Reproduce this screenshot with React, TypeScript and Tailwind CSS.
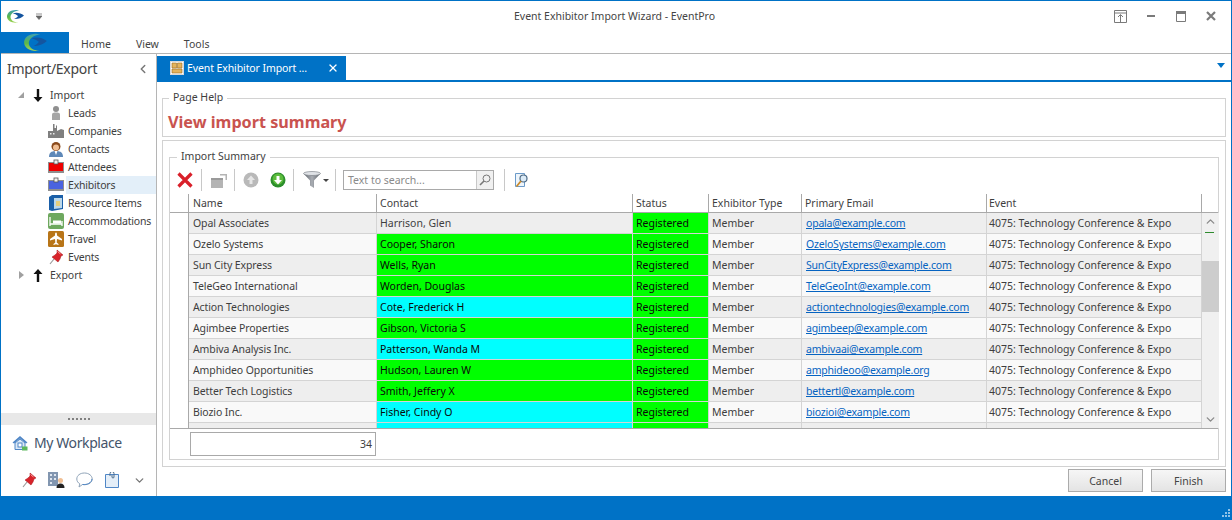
import { ReactNode } from "react";
import { ChevronDown, ChevronLeft, ChevronUp, X } from "lucide-react";

interface Row {
  name: string;
  contact: string;
  tint: "" | "bg-[#00ff00] text-[#0a0a0a]" | "bg-[#00ffff] text-[#0a0a0a]";
  email: string;
}

const GREEN = "bg-[#00ff00] text-[#0a0a0a]" as const;
const CYAN = "bg-[#00ffff] text-[#0a0a0a]" as const;

const rows: Row[] = [
  { name: "Opal Associates", contact: "Harrison, Glen", tint: "", email: "opala@example.com" },
  { name: "Ozelo Systems", contact: "Cooper, Sharon", tint: GREEN, email: "OzeloSystems@example.com" },
  { name: "Sun City Express", contact: "Wells, Ryan", tint: GREEN, email: "SunCityExpress@example.com" },
  { name: "TeleGeo International", contact: "Worden, Douglas", tint: GREEN, email: "TeleGeoInt@example.com" },
  { name: "Action Technologies", contact: "Cote, Frederick H", tint: CYAN, email: "actiontechnologies@example.com" },
  { name: "Agimbee Properties", contact: "Gibson, Victoria S", tint: GREEN, email: "agimbeep@example.com" },
  { name: "Ambiva Analysis Inc.", contact: "Patterson, Wanda M", tint: CYAN, email: "ambivaai@example.com" },
  { name: "Amphideo Opportunities", contact: "Hudson, Lauren W", tint: GREEN, email: "amphideoo@example.org" },
  { name: "Better Tech Logistics", contact: "Smith, Jeffery X", tint: GREEN, email: "bettertl@example.com" },
  { name: "Biozio Inc.", contact: "Fisher, Cindy O", tint: CYAN, email: "biozioi@example.com" },
];

function Logo({ w, h }: { w: number; h: number }) {
  return (
    <svg width={w} height={h} viewBox="0 0 24 20">
      <defs>
        <linearGradient id="crescent" x1="0" y1="0" x2="0" y2="1">
          <stop offset="0" stopColor="#3f9fb0" />
          <stop offset="0.55" stopColor="#5cb848" />
          <stop offset="1" stopColor="#a4d65a" />
        </linearGradient>
      </defs>
      <path d="M17 1.500C8 -1 0 3.500 0 10c0 6 7 10 16 8.500C9 18.500 4.500 14.500 5 10c.4-4 5-8 12-8.500z" fill="url(#crescent)" />
      <path d="M8 5.500c5-1.500 11-1 16 3-3.500 3.500-9 5.500-14 5 3-1.200 5-3 5.500-4.300C13.500 7.500 11 6.300 8 5.500z" fill="#14559f" />
    </svg>
  );
}

function Pin() {
  return (
    <svg width="16" height="16" viewBox="0 0 16 16">
      <path d="M2 15l4-5" stroke="#9a9a9a" strokeWidth="1.200" />
      <path d="M9 1l6 5-2 1-1 3-2 3-6-5 3-2 2-2z" fill="#d8232a" stroke="#a31218" strokeWidth=".5" />
      <path d="M9.500 2.500l3 2.500" stroke="#f7a0a0" />
    </svg>
  );
}

function Badge({ fill }: { fill: string }) {
  return (
    <svg width="16" height="16" viewBox="0 0 16 16">
      <rect x="0" y="3" width="16" height="11" fill="#8f8f8f" />
      <rect x="1" y="4" width="14" height="8" fill={fill} />
      <rect x="6" y="1" width="4" height="4" fill="#f2f2f2" stroke="#555" strokeWidth=".8" />
    </svg>
  );
}

const treeIcons: Record<string, ReactNode> = {
  Leads: (
    <svg width="16" height="16" viewBox="0 0 16 16">
      <circle cx="8" cy="4" r="3" fill="#8f8f8f" />
      <path d="M4 15V9.500C4 8 5.500 7.500 8 7.500s4 .5 4 2V15z" fill="#a6a6a6" />
    </svg>
  ),
  Companies: (
    <svg width="16" height="16" viewBox="0 0 16 16">
      <path d="M0 15V8l5 0V1h1.500v4H8V2.500h1V8l4-2 3 1v8z" fill="#7f7f7f" />
      <path d="M2 10h1.500v1.500H2zm3 0h1.500v1.500H5z" fill="#e8e8e8" />
    </svg>
  ),
  Contacts: (
    <svg width="16" height="16" viewBox="0 0 16 16">
      <path d="M1 16c0-4 2-6 7-6s7 2 7 6z" fill="#5e88b8" />
      <path d="M6.500 10L8 14l1.500-4z" fill="#fff" />
      <circle cx="8" cy="5.500" r="4.500" fill="#8a4a1c" />
      <circle cx="8" cy="6.500" r="3" fill="#f0bf94" />
    </svg>
  ),
  Attendees: <Badge fill="#ee0000" />,
  Exhibitors: <Badge fill="#4a63e0" />,
  "Resource Items": (
    <svg width="16" height="16" viewBox="0 0 16 16">
      <path d="M1 2l3-2h11v14l-11 2-3-1z" fill="#1a5fa8" />
      <path d="M6 3h8v10l-8 1z" fill="#bcd8ea" />
      <path d="M8 6h4v5H8z" fill="#e6cf7c" />
    </svg>
  ),
  Accommodations: (
    <svg width="16" height="16" viewBox="0 0 16 16">
      <rect width="16" height="16" rx="2" fill="#6ea85f" />
      <path d="M2 4v9M14 8v5M2 11h12" stroke="#fff" strokeWidth="1.300" />
      <rect x="5" y="7.500" width="8" height="3" fill="#fff" />
    </svg>
  ),
  Travel: (
    <svg width="16" height="16" viewBox="0 0 16 16">
      <rect width="16" height="16" rx="1.500" fill="#b87518" />
      <path d="M8 1.500c.8 0 1 1 1 3l5 3.500v1.500L9 8l-.3 3.500L10.500 13v1L8 13.300 5.500 14v-1l1.800-1.500L7 8 2 9.500V8l5-3.500c0-2 .2-3 1-3z" fill="#fff" />
    </svg>
  ),
  Events: <Pin />,
};

function TreeRow({ label }: { label: string }) {
  const selected = label === "Exhibitors";
  return (
    <div className="flex h-[18px] items-center pl-[47px]">
      <span className="flex w-[16px] shrink-0">{treeIcons[label]}</span>
      <span className={`ml-[2px] flex h-full flex-1 items-center pl-[2px] tracking-[-0.2px] ${selected ? "bg-[#e3eff9]" : ""}`}>{label}</span>
    </div>
  );
}

function Sep({ ml }: { ml: string }) {
  return <div className={`h-[22px] w-px bg-[#c8c8c8] ${ml}`} />;
}

function Cell({ w, className = "", children }: { w: string; className?: string; children?: ReactNode }) {
  return (
    <div className={`flex shrink-0 items-center overflow-hidden whitespace-nowrap border-r border-[#d4d4d4] ${w} ${className}`}>
      {children}
    </div>
  );
}

function HeaderCell({ w, label, pl = "pl-[3px]" }: { w: string; label: string; pl?: string }) {
  return (
    <div className={`flex shrink-0 items-center border-r border-[#a9a9a9] ${pl} ${w}`}>{label}</div>
  );
}

function GridRow({ row, index }: { row: Row; index: number }) {
  const zebra = index % 2 === 0 ? "bg-[#eeeeee]" : "bg-[#f9f9f9]";
  return (
    <div className={`flex h-[21px] border-b border-[#d4d4d4] ${zebra}`}>
      <Cell w="w-[188px]" className="pl-[4px] tracking-[-0.1px]">{row.name}</Cell>
      <Cell w="w-[256px]" className={`pl-[3px] ${row.tint}`}>{row.contact}</Cell>
      <Cell w="w-[76px]" className={`pl-[3px] ${GREEN}`}>Registered</Cell>
      <Cell w="w-[93px]" className="pl-[3px]">Member</Cell>
      <Cell w="w-[185px]" className="pl-[4px]">
        <span className="tracking-[-0.2px] text-[#0563c1] underline">{row.email}</span>
      </Cell>
      <Cell w="w-[215px]" className="pl-[2px]">4075: Technology Conference &amp; Expo</Cell>
    </div>
  );
}

export default function App() {
  return (
    <div className="flex h-[520px] w-[1232px] flex-col overflow-hidden border-x border-t border-[#0072c6] bg-white font-['Noto_Sans',sans-serif] text-[10.500px] leading-[14px] text-[#3e3e3e]">
      {/* title bar */}
      <div className="grid h-[31px] shrink-0 grid-cols-[1fr_auto_1fr] items-center pb-[1px]">
        <div className="flex items-center pl-[6px]">
          <Logo w={17} h={15} />
          <svg className="ml-[12px]" width="6" height="7" viewBox="0 0 6 7">
            <path d="M0 1h6M0 3h6L3 6.500z" stroke="#666" fill="#666" strokeWidth=".7" />
          </svg>
        </div>
        <div className="pr-[3px] text-[#444]">Event Exhibitor Import Wizard - EventPro</div>
        <div className="flex items-center justify-end text-[#7a7a7a]">
          <svg width="13" height="13" viewBox="0 0 13 13" fill="none" stroke="#7a7a7a">
            <path d="M.5.500h12v12H.5zM.5 3h12M6.500 5v7.500M4 7l2.500-2.500L9 7" />
          </svg>
          <div className="ml-[20px] h-[2.500px] w-[8px] bg-[#7a7a7a]" />
          <svg className="ml-[21px]" width="10" height="11" viewBox="0 0 10 11" fill="none" stroke="#7a7a7a">
            <path d="M.5 1.500h9v9h-9z" />
            <path d="M0 1.500h10" strokeWidth="3" />
          </svg>
          <svg className="ml-[20px] mr-[15px]" width="10" height="10" viewBox="0 0 10 10" stroke="#7a7a7a" strokeWidth="2.200">
            <path d="M1 1l8 8M9 1l-8 8" />
          </svg>
        </div>
      </div>

      {/* ribbon tabs */}
      <div className="flex h-[22px] shrink-0 border-b border-[#b5b5b5]">
        <div className="flex h-[21px] w-[68px] items-center justify-center bg-[#0072c6]">
          <Logo w={23} h={19} />
        </div>
        <span className="ml-[12px] self-center pt-[3px] text-[#444]">Home</span>
        <span className="ml-[25px] self-center pt-[3px] text-[#444]">View</span>
        <span className="ml-[25px] self-center pt-[3px] text-[#444]">Tools</span>
      </div>

      <div className="flex min-h-0 flex-1">
        {/* navigation pane */}
        <div className="flex w-[156px] shrink-0 flex-col border-r border-[#b5b5b5]">
          <div className="flex h-[32px] shrink-0 items-center justify-between pb-[3px] pl-[6px] pr-[6px] text-[14px] tracking-[-0.3px] text-[#444]">
            Import/Export
            <ChevronLeft size={14} strokeWidth={2.500} className="text-[#777]" />
          </div>
          <div className="flex-1">
            <div className="flex h-[18px] items-center pl-[17px]">
              <svg width="6" height="6" viewBox="0 0 6 6"><path d="M6 0v6H0z" fill="#a0a0a0" /></svg>
              <svg className="ml-[9px]" width="10" height="13" viewBox="0 0 10 13"><path d="M3.800 0h2.400v8H9.500L5 13 .5 8h3.300z" fill="#111" /></svg>
              <span className="ml-[7px]">Import</span>
            </div>
            <TreeRow label="Leads" />
            <TreeRow label="Companies" />
            <TreeRow label="Contacts" />
            <TreeRow label="Attendees" />
            <TreeRow label="Exhibitors" />
            <TreeRow label="Resource Items" />
            <TreeRow label="Accommodations" />
            <TreeRow label="Travel" />
            <TreeRow label="Events" />
            <div className="flex h-[18px] items-center pl-[18px]">
              <svg width="5" height="8" viewBox="0 0 5 8"><path d="M0 0l5 4-5 4z" fill="#a0a0a0" /></svg>
              <svg className="ml-[9px]" width="10" height="13" viewBox="0 0 10 13"><path d="M3.800 13h2.400V5H9.500L5 0 .5 5h3.300z" fill="#111" /></svg>
              <span className="ml-[7px]">Export</span>
            </div>
          </div>
          <div className="flex h-[12px] shrink-0 items-center justify-center gap-[2px] bg-[#e8e8e8]">
            {[0, 1, 2, 3, 4, 5].map((i) => (
              <div key={i} className="h-[2px] w-[2px] bg-[#808080]" />
            ))}
          </div>
          <div className="flex h-[37px] shrink-0 items-center pb-[1px] pl-[11px] text-[14px] tracking-[-0.4px] text-[#44546a]">
            <svg width="16" height="16" viewBox="0 0 16 16">
              <path d="M8 1L.5 7.500 2 8.500 8 3.500l6 5 1.500-1z" fill="#4f86c6" />
              <path d="M3 8v6.500h10V8L8 4z" fill="#dbe8f6" stroke="#4f86c6" />
              <rect x="6" y="8" width="4" height="4" fill="#fff" stroke="#4f86c6" />
              <rect x="10" y="11.500" width="5.500" height="4" fill="#5cb85c" />
            </svg>
            <span className="ml-[6px]">My Workplace</span>
          </div>
          <div className="flex h-[34px] shrink-0 items-center pl-[20px] pt-[2px]">
            <Pin />
            <svg className="ml-[11px]" width="17" height="16" viewBox="0 0 17 16">
              <rect x="0" y="0" width="10" height="14" fill="#8296b0" />
              <path d="M2 2h2v2H2zm4 0h2v2H6zM2 6h2v2H2zm4 0h2v2H6zM2 10h2v2H2z" fill="#dfe6ef" />
              <circle cx="12.500" cy="8.500" r="2.500" fill="#f0bf94" />
              <path d="M8.500 16c0-3 1.500-4.500 4-4.500s4 1.500 4 4.500z" fill="#222" />
            </svg>
            <svg className="ml-[11px]" width="17" height="16" viewBox="0 0 17 16" fill="none">
              <path d="M8.500 1C4 1 .8 3.500.8 7c0 2.200 1.200 3.800 3 4.800L3 15l3.500-2.500c.7.100 1.300.2 2 .2 4.500 0 7.700-2.500 7.700-5.700S13 1 8.500 1z" fill="#fff" stroke="#8fa3b8" />
              <path d="M6.500 12.500c4.500.5 9-1.500 9.500-5.500" stroke="#4f86c6" />
            </svg>
            <svg className="ml-[12px]" width="14" height="16" viewBox="0 0 14 16">
              <path d="M.5 2.500h13v13H.5z" fill="#e4eef8" stroke="#4f86c6" />
              <path d="M5 4V1.500a2 2 0 014 0V5a1 1 0 01-2 0V3" fill="none" stroke="#4a6a8a" />
            </svg>
            <ChevronDown size={13} strokeWidth={2.500} className="ml-[14px] text-[#777]" />
          </div>
        </div>

        {/* document area */}
        <div className="flex min-w-0 flex-1 flex-col">
          <div className="flex h-[28px] shrink-0 items-end justify-between border-b-2 border-[#0072c6]">
            <div className="flex h-[24px] w-[189px] items-center bg-[#0072c6] pl-[13px] pr-[7px] text-white">
              <svg width="14" height="14" viewBox="0 0 14 14">
                <rect x=".5" y=".5" width="13" height="13" fill="#fff" stroke="#d9d9d9" />
                <path d="M2 2h4.500v5H2zM7.500 2H12v5H7.500zM2 8h10v4H2z" fill="#e3b35c" stroke="#9a6a1c" strokeWidth=".6" />
              </svg>
              <span className="ml-[3px] tracking-[-0.1px]">Event Exhibitor Import ...</span>
              <X size={12} strokeWidth={2.500} className="ml-auto" />
            </div>
            <svg className="mb-[12px] mr-[6px]" width="8" height="5" viewBox="0 0 8 5">
              <path d="M0 0h8L4 5z" fill="#0072c6" />
            </svg>
          </div>

          <div className="flex min-h-0 flex-1 flex-col px-[5px] pt-[9px]">
            <fieldset className="h-[46px] min-w-0 shrink-0 border border-[#d2d2d2]">
              <legend className="ml-[6px] -translate-y-px px-[4px]">Page Help</legend>
              <div className="mt-[7px] pl-[5px] text-[16.200px] font-bold leading-[20px] text-[#c9534f]">
                View import summary
              </div>
            </fieldset>

            <div className="mt-[3px] h-[327px] shrink-0 border border-[#d2d2d2] px-[6px] pt-[9px]">
              <fieldset className="h-[310px] min-w-0 border border-[#d2d2d2]">
                <legend className="ml-[7px] -translate-y-px px-[4px]">Import Summary</legend>

                {/* toolbar */}
                <div className="flex h-[30px] items-center pt-[2px]">
                  <svg className="ml-[7px]" width="16" height="16" viewBox="0 0 16 16" stroke="#d9202a" strokeWidth="3.200">
                    <path d="M1.500 1.500l13 13M14.500 1.500l-13 13" />
                  </svg>
                  <Sep ml="ml-[8px]" />
                  <svg className="ml-[9px]" width="16" height="15" viewBox="0 0 16 15" fill="#b4b4b4">
                    <path d="M0 5h12v10H0z" />
                    <path d="M0 5h12v2H0z" fill="#9a9a9a" />
                    <path d="M9 1h7v6h-1.500V2.500H9z" />
                  </svg>
                  <Sep ml="ml-[7px]" />
                  <svg className="ml-[8px]" width="16" height="16" viewBox="0 0 16 16">
                    <circle cx="8" cy="8" r="7.500" fill="#b9b9b9" />
                    <path d="M8 3.500L12 8H9.500v4h-3V8H4z" fill="#e6e6e6" />
                  </svg>
                  <svg className="ml-[11px]" width="16" height="16" viewBox="0 0 16 16">
                    <circle cx="8" cy="8" r="7.500" fill="#2c8f2c" />
                    <circle cx="8" cy="7" r="5.500" fill="#5cbc3c" />
                    <path d="M8 12.500L4 8h2.500V4h3v4H12z" fill="#fff" />
                  </svg>
                  <Sep ml="ml-[7px]" />
                  <svg className="ml-[9px]" width="18" height="18" viewBox="0 0 18 18">
                    <defs>
                      <linearGradient id="funnel" x1="0" y1="0" x2="1" y2="0">
                        <stop offset="0" stopColor="#5d6269" />
                        <stop offset="0.5" stopColor="#a9adb3" />
                        <stop offset="1" stopColor="#5d6269" />
                      </linearGradient>
                    </defs>
                    <path d="M.5 2.500h17L11 9.500V17l-4-2.500v-5z" fill="url(#funnel)" />
                    <ellipse cx="9" cy="2.500" rx="8.500" ry="2" fill="#dfe2e6" stroke="#74797f" strokeWidth=".6" />
                  </svg>
                  <svg className="ml-[2px]" width="6" height="3" viewBox="0 0 6 3"><path d="M0 0h6L3 3z" fill="#444" /></svg>
                  <Sep ml="ml-[6px]" />
                  <div className="ml-[7px] flex h-[20px] w-[151px] items-center border border-[#a9a9a9] pl-[4px] text-[#8a8a8a]">
                    <span className="flex-1">Text to search...</span>
                    <div className="flex h-full w-[17px] items-center justify-center border-l border-[#c8c8c8] bg-[#f0f0f0]">
                      <svg width="12" height="12" viewBox="0 0 12 12" fill="none" stroke="#777">
                        <circle cx="7.500" cy="4.500" r="3.500" />
                        <path d="M5 7l-4 4" strokeWidth="1.600" />
                      </svg>
                    </div>
                  </div>
                  <Sep ml="ml-[10px]" />
                  <svg className="ml-[10px]" width="14" height="15" viewBox="0 0 14 15">
                    <path d="M.5.500h9v13h-9z" fill="#eef5fb" stroke="#6b9ac9" />
                    <circle cx="8.500" cy="5.500" r="3.500" fill="#dcebf7" stroke="#4d6a85" strokeWidth="1.200" />
                    <path d="M6 8l-4.500 5.500" stroke="#c98a2a" strokeWidth="1.800" />
                  </svg>
                </div>

                {/* grid */}
                <div className="flex h-[19px] border-b border-[#a9a9a9]">
                  <div className="w-[19px] shrink-0 border-r border-[#a9a9a9]" />
                  <HeaderCell w="w-[188px]" label="Name" pl="pl-[4px]" />
                  <HeaderCell w="w-[256px]" label="Contact" />
                  <HeaderCell w="w-[76px]" label="Status" />
                  <HeaderCell w="w-[93px]" label="Exhibitor Type" />
                  <HeaderCell w="w-[185px]" label="Primary Email" />
                  <HeaderCell w="w-[215px]" label="Event" pl="pl-[2px]" />
                </div>
                <div className="flex h-[216px] border-b border-[#a9a9a9]">
                  <div className="w-[19px] shrink-0 border-r border-[#a9a9a9]" />
                  <div className="w-[1013px] shrink-0 overflow-hidden">
                    {rows.map((row, i) => (
                      <GridRow key={row.name} row={row} index={i} />
                    ))}
                    <div className="flex h-[5px] bg-[#eeeeee]">
                      <Cell w="w-[188px]" />
                      <Cell w="w-[256px]" className={CYAN} />
                      <Cell w="w-[76px]" className={GREEN} />
                      <Cell w="w-[93px]" />
                      <Cell w="w-[185px]" />
                      <Cell w="w-[215px]" />
                    </div>
                  </div>
                  <div className="flex w-[17px] shrink-0 flex-col items-center bg-[#f0f0f0] text-[#8a8a8a]">
                    <ChevronUp size={13} strokeWidth={2.500} className="mt-[2px]" />
                    <div className="ml-[3px] mt-[4px] h-px w-[9px] self-start bg-[#2e8b2e]" />
                    <div className="mt-[28px] h-[51px] w-full bg-[#cdcdcd]" />
                    <ChevronDown size={13} strokeWidth={2.500} className="mb-[2px] mt-auto" />
                  </div>
                </div>
                <div className="pl-[20px] pt-[3px]">
                  <div className="flex h-[24px] w-[186px] items-center justify-end border border-[#a9a9a9] pr-[3px]">34</div>
                </div>
              </fieldset>
            </div>

            <div className="mt-[2px] flex justify-end gap-[8px]">
              <button className="h-[23px] w-[75px] border border-[#ababab] bg-gradient-to-b from-[#f6f6f6] to-[#e4e4e4] text-[#444]">Cancel</button>
              <button className="h-[23px] w-[75px] border border-[#ababab] bg-gradient-to-b from-[#f6f6f6] to-[#e4e4e4] text-[#444]">Finish</button>
            </div>
          </div>
        </div>
      </div>

      {/* status bar */}
      <div className="flex h-[24px] shrink-0 items-end justify-end bg-[#0072c6] pb-[2px] pr-[1px]">
        <svg width="9" height="9" viewBox="0 0 9 9" fill="#8fc2e8">
          <path d="M7 0h2v2H7zM4 3h2v2H4zM7 3h2v2H7zM1 6h2v2H1zM4 6h2v2H4zM7 6h2v2H7z" />
        </svg>
      </div>
    </div>
  );
}
